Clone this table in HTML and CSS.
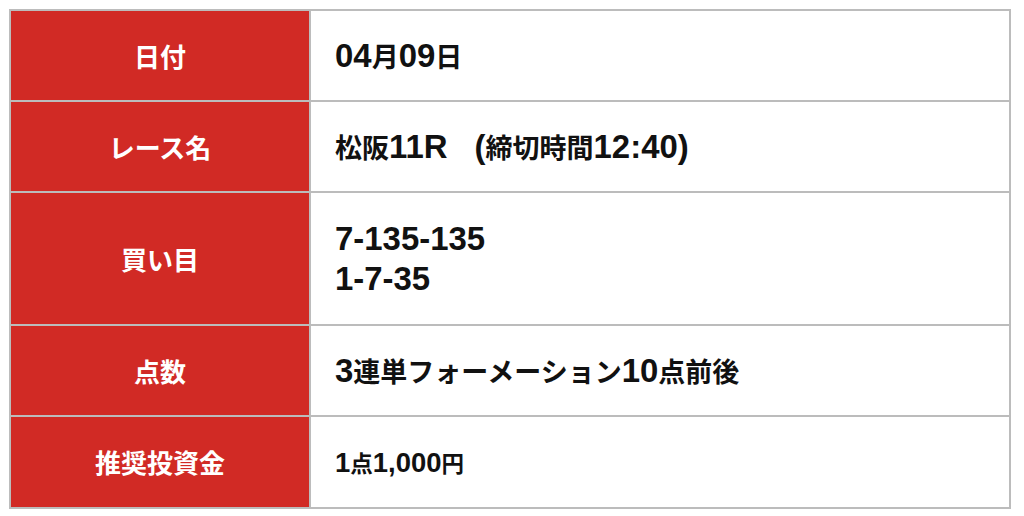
FILE: index.html
```html
<!DOCTYPE html>
<html lang="ja">
<head>
<meta charset="utf-8">
<title>予想</title>
<link rel="stylesheet" href="styles.css">
</head>
<body>
<table class="info">
  <tbody>
    <tr class="r1">
      <th class="label">日付</th>
      <td class="value"><span class="en">04</span>月<span class="en">09</span>日</td>
    </tr>
    <tr class="r2">
      <th class="label">レース名</th>
      <td class="value">松阪<span class="en">11R</span>　<span class="en">(</span>締切時間<span class="en">12:40)</span></td>
    </tr>
    <tr class="r3">
      <th class="label">買い目</th>
      <td class="value"><span class="en">7-135-135</span><br><span class="en">1-7-35</span></td>
    </tr>
    <tr class="r4">
      <th class="label">点数</th>
      <td class="value"><span class="en">3</span>連単フォーメーション<span class="en">10</span>点前後</td>
    </tr>
    <tr class="r5">
      <th class="label">推奨投資金</th>
      <td class="value small"><span class="en">1</span>点<span class="en">1,000</span>円</td>
    </tr>
  </tbody>
</table>
</body>
</html>
```

FILE: styles.css
```css
html, body {
  margin: 0;
  padding: 0;
  background: #ffffff;
}

body {
  padding: 9px 13px 0 9px;
  font-family: "Noto Sans CJK JP", "Noto Sans", sans-serif;
}

.info {
  width: 1002px;
  border-collapse: separate;
  border-spacing: 2px;
  background: #bcbcbc;
}

.label {
  width: 298px;
  padding: 0;
  background: #d12a25;
  color: #ffffff;
  font-size: 26px;
  font-weight: 700;
  text-align: center;
  vertical-align: middle;
  line-height: 40px;
}

.value {
  padding: 0 0 0 24px;
  background: #ffffff;
  color: #111111;
  font-size: 27px;
  font-weight: 700;
  text-align: left;
  vertical-align: middle;
  line-height: 40px;
}

.value.small {
  font-size: 22.5px;
}

.en {
  font-family: "Liberation Sans", Arial, sans-serif;
  font-size: 1.22em;
  font-weight: 700;
}

.r1 > * { height: 89px; }
.r2 > * { height: 89px; }
.r3 > * { height: 131px; }
.r4 > * { height: 89px; }
.r5 > * { height: 90px; }
```
